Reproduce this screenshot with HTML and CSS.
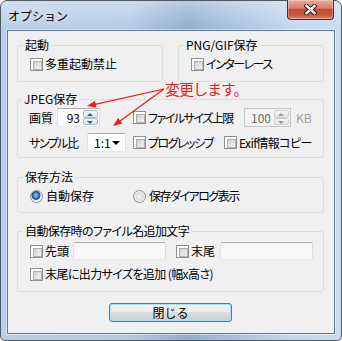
FILE: index.html
```html
<!DOCTYPE html>
<html lang="ja">
<head>
    <meta charset="UTF-8">
    <title>オプション</title>
    <link rel="stylesheet" href="styles.css">
</head>
<body>

    <div class="window">
        <div class="titlebar">
            <span class="title">オプション</span>
            <span class="close">
                <svg width="13" height="11" viewBox="0 0 13 11">
                    <path d="M2.5 2 L10.5 9 M10.5 2 L2.5 9" stroke="#3d1712" stroke-width="4.4" stroke-linecap="square"/>
                    <path d="M2.5 2 L10.5 9 M10.5 2 L2.5 9" stroke="#fff" stroke-width="2.4" stroke-linecap="square"/>
                </svg>
            </span>
        </div>

        <div class="client">
            <div class="top-row">
                <fieldset class="group">
                    <legend>起動</legend>
                    <label class="check"><span class="cb"></span>多重起動禁止</label>
                </fieldset>
                <fieldset class="group">
                    <legend>PNG/GIF保存</legend>
                    <label class="check kana"><span class="cb"></span>インターレース</label>
                </fieldset>
            </div>

            <fieldset class="group jpeg">
                <legend>JPEG保存</legend>
                <div class="jpeg-row">
                    <span class="lbl lbl-quality">画質</span>
                    <div class="spin"><span class="val">93</span><span class="arrows"><i class="up"></i><i class="dn"></i></span></div>
                    <label class="check kana file-limit"><span class="cb"></span>ファイルサイズ上限</label>
                    <div class="spin disabled"><span class="val">100</span><span class="arrows"><i class="up"></i><i class="dn"></i></span></div>
                    <span class="unit">KB</span>
                </div>
                <div class="jpeg-row">
                    <span class="lbl lbl-sample kana">サンプル比</span>
                    <div class="combo"><span>1:1</span><i class="caret"></i></div>
                    <label class="check kana progressive"><span class="cb"></span>プログレッシブ</label>
                    <label class="check mixed"><span class="cb"></span>Exif情報コピー</label>
                </div>
            </fieldset>

            <fieldset class="group save">
                <legend>保存方法</legend>
                <div class="radio-row">
                    <label class="check auto"><span class="rb on"></span>自動保存</label>
                    <label class="check kana"><span class="rb"></span>保存ダイアログ表示</label>
                </div>
            </fieldset>

            <fieldset class="group names">
                <legend class="mixed">自動保存時のファイル名追加文字</legend>
                <div class="names-row">
                    <label class="check head"><span class="cb"></span>先頭</label>
                    <span class="textbox"></span>
                    <label class="check tail"><span class="cb"></span>末尾</label>
                    <span class="textbox"></span>
                </div>
                <label class="check mixed size-row"><span class="cb"></span>末尾に出力サイズを追加 (幅x高さ)</label>
            </fieldset>

            <div class="footer">
                <button class="btn">閉じる</button>
            </div>
        </div>

        <!-- annotation drawn over the dialog -->
        <svg class="arrows-note" width="342" height="341" viewBox="0 0 342 341">
            <path d="M164 89 L95 104.3 M164 89 L120 121" stroke="#ee1c1c" stroke-width="1.2" fill="none"/>
            <polygon points="87,106 96.5,107.5 95,100.7" fill="#ee1c1c"/>
            <polygon points="113,126 122.3,123.5 118.2,117.9" fill="#ee1c1c"/>
        </svg>
        <span class="note">変更します。</span>
    </div>

</body>
</html>
```

FILE: styles.css
```css
* {
    box-sizing: border-box;
}

body {
    margin: 0;
    font-family: "Noto Sans CJK JP", "Noto Sans", sans-serif;
    font-size: 12px;
    color: #000;
    background: #fff;
}

.window {
    position: relative;
    width: 342px;
    height: 341px;
    display: flex;
    flex-direction: column;
    padding: 0 6px 6px 6px;
    border: 1px solid #4e5966;
    border-radius: 7px 7px 5px 5px;
    background:
        linear-gradient(180deg, rgba(255, 255, 255, 0.35) 0, rgba(255, 255, 255, 0) 28px),
        linear-gradient(90deg, #b8cfe8 0%, #b2cae5 38%, #8fadce 55%, #a3bfdd 66%, #c2d7ee 85%, #c8dcf1 100%);
}

.titlebar {
    height: 29px;
    display: flex;
    align-items: flex-start;
    padding-left: 1px;
}

.title {
    margin-top: 8px;
    line-height: 14px;
    color: #000;
    text-shadow: 0 0 6px rgba(255, 255, 255, 0.9);
}

.close {
    margin-left: auto;
    margin-right: 1px;
    margin-top: -1px;
    width: 47px;
    height: 20px;
    display: flex;
    align-items: center;
    justify-content: center;
    border: 1px solid #5a2620;
    border-top: none;
    border-radius: 0 0 4px 4px;
    background: linear-gradient(180deg, #e8ab9d 0%, #d88070 42%, #c44c36 50%, #c9563f 80%, #dd8a72 100%);
    box-shadow: inset 0 0 0 1px rgba(255, 255, 255, 0.3);
}

.client {
    flex: 1;
    display: flex;
    flex-direction: column;
    padding: 7px 10px 10px 9px;
    background: #f0f0f0;
    border: 1px solid #66798e;
    box-shadow: 0 0 0 1px rgba(255, 255, 255, 0.45);
}

.group {
    margin: 0;
    min-width: 0;
    padding: 5px 8px 10px 12px;
    border: 1px solid #d5dfe5;
    border-radius: 3px;
}

.group legend {
    padding: 0 2px;
    margin-left: -7px;
    line-height: 14px;
}

/* narrower kana, closer to the dialog's UI font */
.kana {
    font-feature-settings: "palt";
    letter-spacing: -1.5px;
}

.mixed {
    font-feature-settings: "palt";
    letter-spacing: -0.6px;
}

.top-row {
    display: flex;
    gap: 15px;
}

.top-row .group {
    flex: 1;
}

.check {
    display: flex;
    align-items: center;
    gap: 2px;
    height: 14px;
    line-height: 14px;
    white-space: nowrap;
}

.cb {
    flex: none;
    width: 13px;
    height: 13px;
    padding: 2px;
    border: 1px solid #8e8f8f;
    background: #fff;
}

.cb::before {
    content: "";
    display: block;
    width: 7px;
    height: 7px;
    border: 1px solid #b0b0b0;
    background: linear-gradient(135deg, #cdcdcd, #f6f6f6);
}

.rb {
    flex: none;
    width: 13px;
    height: 13px;
    margin-right: 1px;
    border: 1px solid #8e8f8f;
    border-radius: 50%;
    background: radial-gradient(circle at 50% 50%, #f6f6f6 0, #dcdcdc 45%, #f4f4f4 70%);
}

.rb.on {
    background: radial-gradient(circle at 45% 40%, #9fd0f5 0, #2a6fb4 35%, #1a4f8a 45%, #eef1f4 55%, #f4f4f4 70%);
}

/* JPEG */
.jpeg {
    margin-top: 10px;
    padding: 2px 8px 5px 11px;
}

.jpeg-row {
    display: flex;
    align-items: center;
    height: 19px;
    white-space: nowrap;
}

.jpeg-row + .jpeg-row {
    margin-top: 6px;
}

.lbl-quality {
    width: 28px;
}

.lbl-sample {
    width: 58px;
}

.spin {
    display: flex;
    width: 43px;
    height: 19px;
    padding: 1px;
    border: 1px solid #abadb3;
    border-color: #abadb3 #dbdfe6 #e3e9ef #e2e3ea;
    background: #fff;
}

.spin .val {
    flex: 1;
    text-align: right;
    padding-right: 3px;
    line-height: 15px;
}

.spin .arrows {
    width: 15px;
    display: flex;
    flex-direction: column;
}

.spin .arrows i {
    flex: 1;
    position: relative;
    border: 1px solid #a9bcd3;
    border-radius: 2px;
    background: linear-gradient(180deg, #f3f7fc, #d6e3f2);
}

.spin .arrows i::before {
    content: "";
    position: absolute;
    left: 3px;
    top: 2px;
    border-left: 3.5px solid transparent;
    border-right: 3.5px solid transparent;
}

.spin .arrows .up::before {
    border-bottom: 3px solid #44597a;
}

.spin .arrows .dn::before {
    top: 2px;
    border-top: 3px solid #44597a;
}

.spin.disabled {
    width: 47px;
    border-color: #c8c8c8;
    background: #f4f4f4;
    color: #6d6d6d;
}

.spin.disabled .arrows i {
    border-color: #cfcfcf;
    background: linear-gradient(180deg, #f4f4f4, #e6e6e6);
}

.spin.disabled .arrows .up::before {
    border-bottom-color: #9a9a9a;
}

.spin.disabled .arrows .dn::before {
    border-top-color: #9a9a9a;
}

.file-limit {
    margin-left: 33px;
    width: 111px;
}

.unit {
    margin-left: 5px;
    color: #a0a0a0;
}

.combo {
    display: flex;
    align-items: center;
    width: 39px;
    height: 19px;
    padding: 0 5px 0 6px;
    border: 1px solid #abadb3;
    border-color: #abadb3 #dbdfe6 #e3e9ef #e2e3ea;
    border-radius: 2px;
    background: #fff;
}

.caret {
    margin-left: auto;
    border-left: 4px solid transparent;
    border-right: 4px solid transparent;
    border-top: 4px solid #000;
}

.progressive {
    margin-left: 7px;
    width: 91px;
}

/* save mode */
.save {
    margin-top: 12px;
    padding: 5px 8px 9px 12px;
}

.radio-row {
    display: flex;
}

.auto {
    width: 103px;
}

/* file names */
.names {
    margin-top: 11px;
    padding: 4px 8px 10px 12px;
}

.names-row {
    display: flex;
    align-items: center;
    height: 18px;
}

.head {
    width: 43px;
}

.tail {
    width: 44px;
    margin-left: 10px;
}

.textbox {
    width: 93px;
    height: 18px;
    border: 1px solid #abadb3;
    border-color: #abadb3 #dbdfe6 #e3e9ef #e2e3ea;
    border-radius: 2px;
    background: #f7f7f7;
}

.size-row {
    margin-top: 7px;
}

.footer {
    display: flex;
    justify-content: center;
    margin-top: 11px;
}

.btn {
    width: 123px;
    height: 19px;
    padding: 0;
    font-family: inherit;
    font-size: 12px;
    line-height: 15px;
    color: #000;
    border: 1px solid #3c7fb1;
    border-radius: 3px;
    background: linear-gradient(180deg, #f2f2f2 0%, #ebebeb 50%, #dddddd 50%, #cfcfcf 100%);
    box-shadow: inset 0 0 0 1px #a9e2fb;
}

/* red note */
.arrows-note {
    position: absolute;
    left: -1px;
    top: -1px;
    pointer-events: none;
}

.note {
    position: absolute;
    left: 164px;
    top: 79px;
    font-size: 15px;
    line-height: 18px;
    letter-spacing: -1px;
    color: #ee1c1c;
}
```
